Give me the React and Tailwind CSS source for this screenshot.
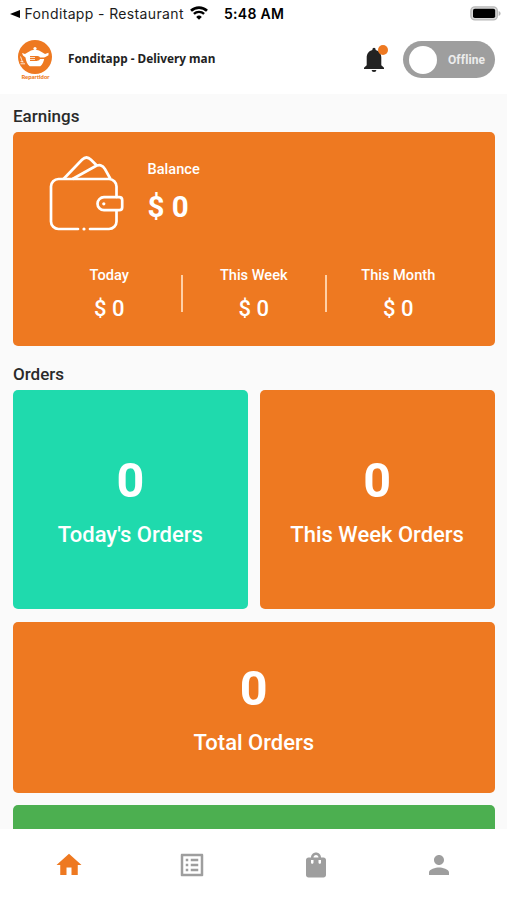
import { MdHome, MdListAlt, MdPerson, MdShoppingBag } from "react-icons/md";

const earnings = [
  { label: "Today", amount: "$ 0" },
  { label: "This Week", amount: "$ 0" },
  { label: "This Month", amount: "$ 0" },
];

const tabs = [
  { name: "Home", Icon: MdHome, active: true },
  { name: "Order requests", Icon: MdListAlt },
  { name: "Orders", Icon: MdShoppingBag },
  { name: "Profile", Icon: MdPerson },
];

function StatusBar() {
  return (
    <div className="flex h-7 items-center pl-[10px] pr-[6px] font-['Inter',sans-serif] text-[14px] leading-none text-[#1c1c1c]">
      <svg viewBox="0 0 10 8" className="h-[8px] w-[10px] text-black">
        <path d="M0 4 10 0v8z" fill="currentColor" />
      </svg>
      <span className="ml-[4.5px] w-[160px] whitespace-nowrap tracking-[0.36px]">Fonditapp - Restaurant</span>
      <svg viewBox="0 0 18 14" className="-mt-[2px] ml-[5.5px] h-[14px] w-[18px] text-black" fill="none" stroke="currentColor">
        <path d="M1 4.8a11.6 11.6 0 0 1 16 0" strokeWidth="2.7" />
        <path d="M3.9 7.9a7.4 7.4 0 0 1 10.2 0" strokeWidth="2.4" />
        <path d="M9 13.8 6.2 10.9a4 4 0 0 1 5.6 0z" fill="currentColor" stroke="none" />
      </svg>
      <span className="ml-[16px] whitespace-nowrap font-semibold tracking-[0.28px] text-black">5:48 AM</span>
      <svg viewBox="0 0 31 15" className="-mt-[2px] ml-auto h-[15px] w-[31px]">
        <rect x="0.9" y="0.9" width="26.4" height="13" rx="4" fill="#d9d9d9" stroke="#b8b8b8" strokeWidth="1.4" />
        <rect x="3" y="2.8" width="22.2" height="9.2" rx="1.8" fill="#000" />
        <path d="M28.6 5v5c1.3-.5 2-1.4 2-2.5s-.7-2-2-2.5z" fill="#b5b5b5" />
      </svg>
    </div>
  );
}

// Pot with a fork on an orange disc, with the role name below it.
function Logo() {
  return (
    <svg viewBox="0 0 40 44" className="h-[44px] w-[40px]">
      <circle cx="20" cy="18" r="17" fill="#ee7921" />
      <circle cx="20" cy="9.5" r="1.6" fill="#fff" />
      <path d="M9.5 15.2l6.5-3.8q4-1.2 8 0l6.5 3.8z" fill="#fff" />
      <path d="M7 14l3 1h20l3.5-1.3v2.5L29.5 18.5c-.6 4-2 7-4.2 8.7H14.7c-2.2-1.7-3.7-4.7-4.2-8.7L8 16.5z" fill="#fff" />
      <path d="M15 17.6h7M15 19.5h7M15 21.4h7" stroke="#ee7921" strokeWidth="1.1" />
      <path d="M20 16.9h2.5c1.4 0 2.2.9 2.5 1.7h6v1.5h-6c-.3.8-1.1 1.7-2.5 1.7H20z" fill="#ee7921" />
      <path d="M5.5 17.5l2 5.5M5.5 22.5l3 .5M5.5 24.8h4.5" stroke="#fff" strokeWidth="1" strokeOpacity="0.8" fill="none" />
      <text
        x="20.5"
        y="40"
        textAnchor="middle"
        textLength="28"
        lengthAdjust="spacingAndGlyphs"
        className="fill-[#ee7921] font-['Lato',sans-serif] text-[5.5px] font-black"
      >
        Repartidor
      </text>
    </svg>
  );
}

function BellIcon() {
  return (
    <svg viewBox="0 0 20 25" className="h-[25px] w-[20px]" fill="#222">
      <path d="M8.4 2.3a1.6 1.6 0 0 1 3.2 0v.7c3.6.9 5.7 3.9 5.7 7.6v7.6l2.7 2.6v1.2H0v-1.2l2.7-2.6v-7.6C2.7 6.9 4.8 3.9 8.4 3z" />
      <path d="M7.6 23h4.8a2.4 2 0 0 1-4.8 0z" />
    </svg>
  );
}

function Header() {
  return (
    <header className="flex h-[66px] items-center bg-white pl-[15px] pr-[12px]">
      <Logo />
      <h1 className="ml-[13px] mt-[-6px] whitespace-nowrap font-['Noto_Sans',sans-serif] text-[11.8px] font-bold leading-4 text-[#222]">
        Fonditapp - Delivery man
      </h1>
      <div className="relative ml-auto mt-[-3px] h-[25px] w-[20px]">
        <BellIcon />
        <span className="absolute -right-[4px] -top-[2px] h-[10px] w-[10px] rounded-full bg-[#ee7921]" />
      </div>
      <div className="ml-[19px] mt-[-3px] flex h-[37px] w-[92px] items-center rounded-full bg-[#9e9e9e] pl-[6px]">
        <span className="h-[28px] w-[28px] rounded-full bg-white" />
        <span className="ml-[11px] font-['Roboto',sans-serif] text-[12px] font-bold leading-none tracking-[0.1px] text-[#ececec]">
          Offline
        </span>
      </div>
    </header>
  );
}

function WalletIcon() {
  return (
    <svg viewBox="0 0 76 76" className="h-[76px] w-[76px]" fill="none" stroke="#fff" strokeWidth="2.7">
      <path
        d="M29 74H9.5A7.5 7.5 0 0 1 2 66.500V31.500A7.500 7.500 0 0 1 9.500 24h50.500a7.500 7.500 0 0 1 7.500 7.500V42M67.500 55.500v11a7.500 7.500 0 0 1-7.500 7.500H41"
        strokeLinecap="round"
      />
      <path d="M14.500 24 33 4.800q4.500-4.500 9 0l6 6" />
      <path d="M23.500 24 45.500 11.700q7-4 10.500 2.500l5.500 9.800" />
      <path d="M55 42.200h15.200q3 0 3 3v7q0 3-3 3H55a6.500 6.500 0 0 1 0-13z" />
      <circle cx="54.8" cy="48.8" r="1.6" fill="#fff" stroke="none" />
      <circle cx="35" cy="74" r="1.6" fill="#fff" stroke="none" />
    </svg>
  );
}

function EarningsCard() {
  return (
    <section className="h-[213.5px] rounded-[5px] bg-[#ee7921] pt-[23px] text-white">
      <div className="flex pl-[36px]">
        <WalletIcon />
        <div className="ml-[22.5px] pt-[4px]">
          <p className="text-[14.6px] font-medium leading-5">Balance</p>
          <p className="mt-[12px] text-[29.5px] font-bold leading-8">$ 0</p>
        </div>
      </div>
      <div className="mt-[34px] flex items-start px-[24px]">
        {earnings.map((item, i) => (
          <div key={item.label} className="relative flex-1 text-center">
            {i > 0 && <span className="absolute -left-px top-[10px] h-[37px] w-[2px] bg-[#ffd0a6]" />}
            <p className="text-[14.6px] font-medium leading-5">{item.label}</p>
            <p className="mt-[10px] text-[22px] font-medium leading-7">{item.amount}</p>
          </div>
        ))}
      </div>
    </section>
  );
}

function OrderCard({ label, count, className }) {
  return (
    <section className={`flex flex-col items-center justify-center rounded-[5px] pt-[4px] text-white ${className}`}>
      <p className="text-[48.5px] font-bold leading-[56px]">{count}</p>
      <p className="mt-[12px] text-[22px] font-medium leading-[28px]">{label}</p>
    </section>
  );
}

export default function App() {
  return (
    <div className="flex h-[900px] w-[507px] flex-col overflow-hidden bg-white font-['Roboto',sans-serif]">
      <StatusBar />
      <Header />
      <main className="min-h-0 flex-1 overflow-hidden bg-[#fafafa] pl-[13px] pr-[12.5px] pt-[11px]">
        <h2 className="mb-[5px] text-[17px] font-medium leading-[22px] text-[#2a2a2a]">Earnings</h2>
        <EarningsCard />
        <h2 className="mb-[5px] mt-[17px] text-[17px] font-medium leading-[22px] text-[#2a2a2a]">Orders</h2>
        <div className="grid grid-cols-2 gap-x-[12px] gap-y-[12.5px]">
          <OrderCard label="Today's Orders" count={0} className="h-[219.5px] bg-[#1fdaad]" />
          <OrderCard label="This Week Orders" count={0} className="h-[219.5px] bg-[#ee7921]" />
          <OrderCard label="Total Orders" count={0} className="col-span-2 h-[171px] bg-[#ee7921]" />
          <div className="col-span-2 h-[171px] rounded-[5px] bg-[#4caf50]" />
        </div>
      </main>
      <nav className="flex h-[71px] items-center bg-white pl-[7px] pr-[6px]">
        {tabs.map(({ name, Icon, active }) => (
          <button
            key={name}
            type="button"
            aria-label={name}
            className={`flex flex-1 justify-center ${active ? "text-[#ee7921]" : "text-[#9e9e9e]"}`}
          >
            <Icon size={30} />
          </button>
        ))}
      </nav>
    </div>
  );
}
